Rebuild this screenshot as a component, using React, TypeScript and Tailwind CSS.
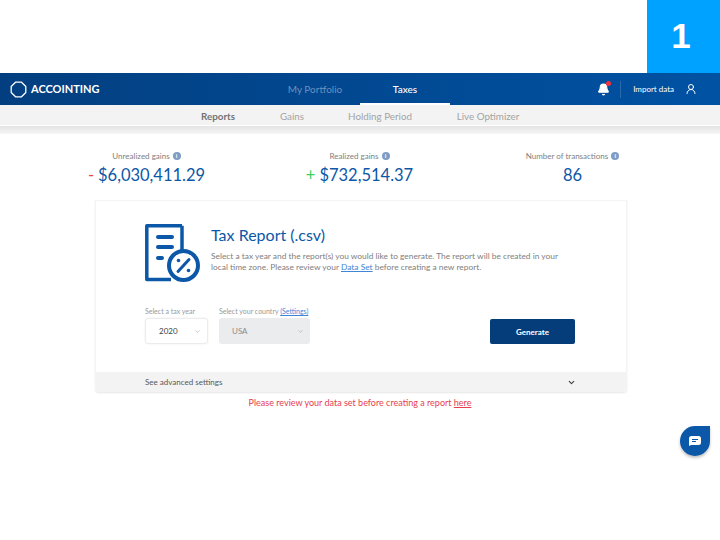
import React from 'react';
import { Bell, ChevronDown, UserRound } from 'lucide-react';

const SUB_TABS = [
  { label: 'Reports', className: 'w-[74px] font-bold text-[#737373]' },
  { label: 'Gains', className: 'w-[74px] text-[#a3a3a3]' },
  { label: 'Holding Period', className: 'w-[102px] text-[#a3a3a3]' },
  { label: 'Live Optimizer', className: 'w-[114px] text-[#a3a3a3]' },
];

const Info = () => (
  <span className="flex h-[8px] w-[8px] items-center justify-center rounded-full bg-[#7f9cc4] text-[6px] font-bold leading-none text-white">
    i
  </span>
);

const Stat = ({ label, sign, signClass, value }: { label: string; sign?: string; signClass?: string; value: string }) => (
  <div className="flex w-[213px] flex-col items-center">
    <div className="flex items-center gap-[3px] text-[8px] leading-[12px] text-[#808080]">
      {label}
      <Info />
    </div>
    <div className="mt-[2px] text-[16.500px] leading-[22px] text-[#0b57a8]">
      {sign && <span className={`mr-[4px] ${signClass}`}>{sign}</span>}
      {value}
    </div>
  </div>
);

const ReportIcon = () => (
  <svg width="56" height="58" viewBox="0 0 56 58" fill="none" stroke="#0b57a8" strokeWidth="3.500">
    <path d="M37 1.800H1.800V55.500H26" strokeLinejoin="round" />
    <path d="M37 1.800V26" />
    <path d="M13 13H27M13 23H27M13 34H17" strokeWidth="4" strokeLinecap="round" />
    <circle cx="38.500" cy="41.500" r="14.500" strokeWidth="4" fill="#fff" />
    <path d="M44 35.500L33 47.500" strokeWidth="3" strokeLinecap="round" />
    <circle cx="33.500" cy="36.500" r="1.800" fill="#0b57a8" stroke="none" />
    <circle cx="43.500" cy="46.500" r="1.800" fill="#0b57a8" stroke="none" />
  </svg>
);

export default function App() {
  return (
    <div className="relative h-[540px] w-[720px] overflow-hidden bg-white font-['Lato','Noto_Sans',sans-serif]">
      {/* slide number */}
      <div className="flex h-[73px] justify-end">
        <div className="flex w-[73px] items-center justify-center bg-[#00a2ff] pr-[5px] font-['Liberation_Sans',sans-serif] text-[35px] font-bold text-white">
          1
        </div>
      </div>

      {/* top nav */}
      <div className="flex h-[32px] items-center bg-gradient-to-r from-[#033f80] to-[#0052a3]">
        <div className="flex w-[270px] items-center pl-[10px]">
          <svg width="17" height="17" viewBox="0 0 17 17" fill="none" stroke="#fff" strokeWidth="1.300">
            <path d="M5.500 1.200H11.500L15.800 5.500V11.500L11.500 15.800H5.500L1.200 11.500V5.500Z" strokeLinejoin="round" />
          </svg>
          <span className="ml-[4px] text-[11px] font-bold text-white">ACCOINTING</span>
        </div>
        <div className="flex h-full w-[90px] items-center justify-center pt-[1px] text-[10px] text-[#6d90bd]">My Portfolio</div>
        <div className="flex h-full w-[90px] items-center justify-center border-b-2 border-white pt-[2px] text-[10px] font-medium text-white">
          Taxes
        </div>
        <div className="flex flex-1 items-center justify-end pr-[23px]">
          <div className="relative">
            <Bell size={13} fill="#fff" stroke="#fff" />
            <span className="absolute right-[-1px] top-[-2px] h-[5px] w-[5px] rounded-full bg-[#f0343c]" />
          </div>
          <div className="ml-[10px] h-[17px] w-px bg-[#2a6aab]" />
          <span className="ml-[12px] text-[8px] text-white">Import data</span>
          <UserRound size={12} className="ml-[11px] text-white" />
        </div>
      </div>

      {/* sub nav */}
      <div className="flex h-[20px] items-center bg-[#f3f3f3] pl-[181px] pt-[2px] text-[9.800px]">
        {SUB_TABS.map((tab) => (
          <div key={tab.label} className={`text-center ${tab.className}`}>
            {tab.label}
          </div>
        ))}
      </div>
      <div className="mt-[1px] h-[8px] bg-gradient-to-b from-[#e4e4e4] to-[#f6f6f6]" />

      {/* stats */}
      <div className="mt-[16px] flex pl-[40px]">
        <Stat label="Unrealized gains" sign="-" signClass="text-[#ef4444]" value="$6,030,411.29" />
        <Stat label="Realized gains" sign="+" signClass="text-[#3ecf5a]" value="$732,514.37" />
        <Stat label="Number of transactions" value="86" />
      </div>

      {/* report card */}
      <div className="ml-[95px] mt-[14px] w-[532px] overflow-hidden rounded-b-[4px] border-x border-t border-[#f4f4f4] shadow-[0_1px_2px_rgba(0,0,0,0.1)]">
        <div className="h-[171px] bg-white pl-[49px] pt-[23px]">
          <div className="flex">
            <ReportIcon />
            <div className="ml-[10px] w-[352px]">
              <div className="text-[16px] leading-[22px] text-[#0b57a8]">Tax Report (.csv)</div>
              <p className="mt-[5px] text-[8.400px] leading-[10.500px] text-[#808080]">
                Select a tax year and the report(s) you would like to generate. The report will be created in your local time zone. Please review your{' '}
                <span className="text-[#3f86d6] underline">Data Set</span> before creating a new report.
              </p>
            </div>
          </div>

          <div className="mt-[24px] flex items-end">
            <div className="w-[74px]">
              <div className="text-[7px] leading-[10px] text-[#999999]">Select a tax year</div>
              <div className="mt-[2px] flex h-[26px] w-[63px] items-center justify-between rounded-[3px] border border-[#ececec] pl-[13px] pr-[6px] text-[8px] text-[#404040] shadow-[0_0_2px_rgba(0,0,0,0.08)]">
                2020
                <ChevronDown size={7} className="text-[#a3a3a3]" />
              </div>
            </div>
            <div className="w-[271px]">
              <div className="text-[7px] leading-[10px] text-[#999999]">
                Select your country <span className="text-[#3f86d6] underline">(Settings)</span>
              </div>
              <div className="mt-[2px] flex h-[26px] w-[91px] items-center justify-between rounded-[3px] bg-[#ebecee] pl-[13px] pr-[6px] text-[8px] text-[#8c8c8c]">
                USA
                <ChevronDown size={7} className="text-[#a3a3a3]" />
              </div>
            </div>
            <button className="h-[25px] w-[85px] rounded-[2px] bg-[#053c7a] text-[8px] font-bold text-white">
              Generate
            </button>
          </div>
        </div>
        <div className="flex h-[20px] items-center justify-between bg-[#f3f3f3] pl-[49px] pr-[50px] text-[8px] text-[#595959]">
          See advanced settings
          <ChevronDown size={9} strokeWidth={3} className="text-[#404040]" />
        </div>
      </div>

      <div className="mt-[5px] text-center text-[9px] leading-[12px] text-[#e8404f]">
        Please review your data set before creating a report <span className="underline">here</span>
      </div>

      {/* chat bubble */}
      <div className="absolute left-[680px] top-[426px] flex h-[30px] w-[30px] items-center justify-center rounded-b-full rounded-tl-full rounded-tr-[3px] bg-[#0b57a8] shadow-[0_2px_3px_rgba(0,0,0,0.25)]">
        <svg width="12" height="10" viewBox="0 0 12 10">
          <path d="M2.500 0H9.500A2.500 2.500 0 0 1 12 2.500V6.500A2.500 2.500 0 0 1 9.500 9H2L0 10V2.500A2.500 2.500 0 0 1 2.500 0Z" fill="#fff" />
          <path d="M3 3.500H9M3 5.500H7" stroke="#0b57a8" strokeWidth="1" />
        </svg>
      </div>
    </div>
  );
}
